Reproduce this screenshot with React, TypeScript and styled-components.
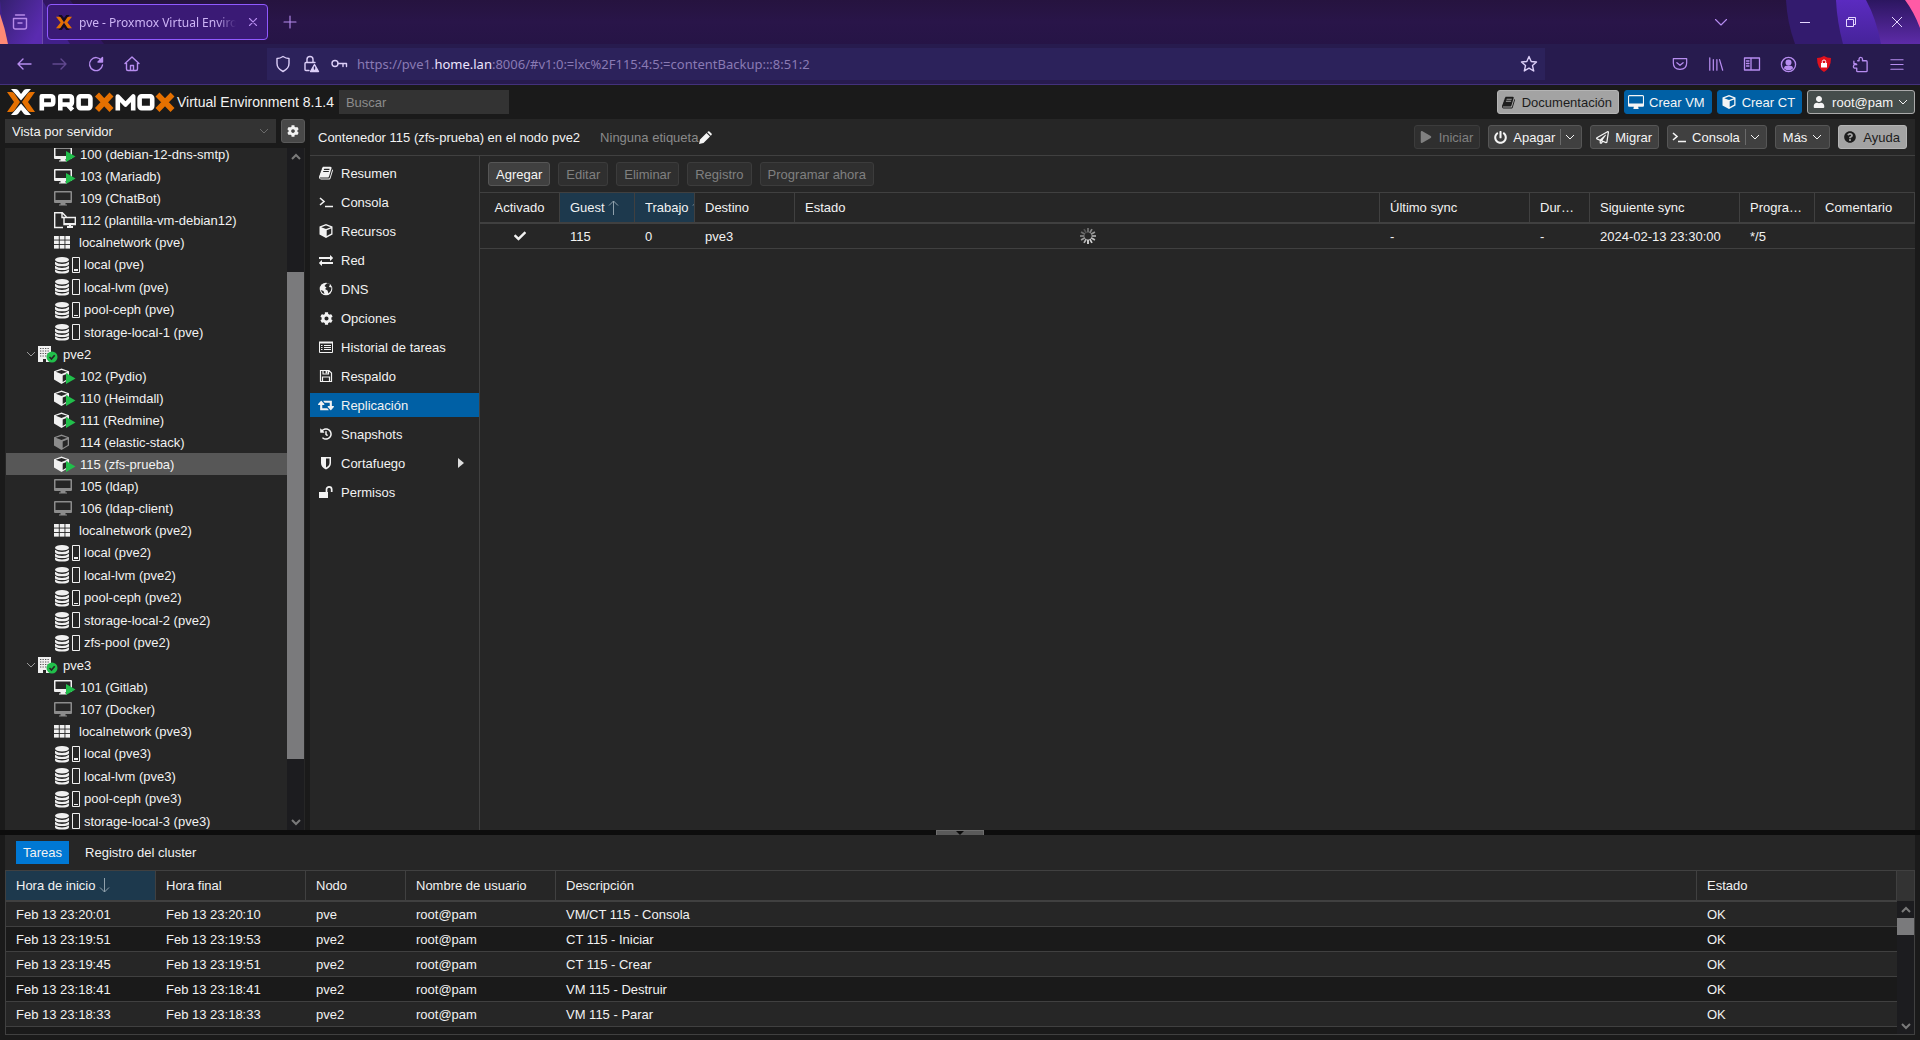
import React from "react";
import styled, { createGlobalStyle, css } from "styled-components";
import * as fa from "react-icons/fa";

const sans = `"Liberation Sans", Arial, Helvetica, sans-serif`;
const chrome = `"Noto Sans", "Open Sans", sans-serif`;

const GlobalStyle = createGlobalStyle`
  * { box-sizing: border-box; }
  body { margin: 0; background: #1a1a1a; color: #f2f2f2; font: 13px/17px ${sans}; overflow: hidden; }
  button, input, select { font: inherit; color: inherit; margin: 0; }
  svg { flex: none; display: block; }
`;

/* ---------- browser window ---------- */

const Screen = styled.div`
  display: flex;
  flex-direction: column;
  height: 100vh;
`;

const TabStrip = styled.header`
  position: relative;
  display: flex;
  align-items: center;
  height: 44px;
  flex: none;
  background: linear-gradient(#26133f, #291549 50%, #261446);
  font-family: ${chrome};
  color: #b68ae8;
`;

const Backdrop = styled.svg<{ $side: "left" | "right" }>`
  position: absolute;
  top: 0;
  ${(p) => (p.$side === "left" ? "left: 0;" : "right: 0;")}
`;

const ChromeButton = styled.button<{ $w: number; $dim?: boolean }>`
  position: relative;
  display: flex;
  align-items: center;
  justify-content: center;
  width: ${(p) => p.$w}px;
  height: 32px;
  padding: 0;
  border: 0;
  background: none;
  color: #b78df0;
  opacity: ${(p) => (p.$dim ? 0.4 : 1)};
`;

const WindowControls = styled.div`
  display: flex;
  margin-left: 38px;
`;

const ViewButton = styled.div`
  position: relative;
  display: flex;
  justify-content: center;
  width: 43px;
  height: 44px;
  padding-right: 8px;
  padding-left: 6px;
  align-items: center;
  border-right: 1px solid #6d4aac;
`;

const Tab = styled.div`
  position: relative;
  display: flex;
  align-items: center;
  width: 221px;
  height: 36px;
  margin: 0 12px 0 4px;
  padding: 0 4px 0 8px;
  gap: 7px;
  border: 1px solid #9059ff;
  border-radius: 4px;
  background: #3a1a75;
`;

const TabTitle = styled.span`
  flex: 1;
  min-width: 0;
  overflow: hidden;
  white-space: nowrap;
  font-size: 12px;
  color: #cdb4f5;
  mask-image: linear-gradient(90deg, #000 88%, transparent);
`;

const Spacer = styled.div`
  flex: 1;
`;

const NavBar = styled.nav`
  display: flex;
  align-items: center;
  flex: none;
  height: 41px;
  padding: 0 6px;
  background: #271b4e;
  border-bottom: 1px solid #43317c;
  font-family: ${chrome};
`;

const NavGroup = styled.div`
  display: flex;
  align-items: center;
`;

const UrlBox = styled.div`
  display: flex;
  align-items: center;
  flex: 1;
  height: 32px;
  margin: 0 117px;
  padding-left: 2px;
  background: #2c225b;
`;

const Url = styled.div`
  flex: 1;
  padding-left: 4px;
  font-size: 13px;
  color: #8a7ab4;
  white-space: nowrap;
  b {
    font-weight: 400;
    color: #ece5ff;
  }
`;

const UrlButton = styled(ChromeButton)`
  color: #dccff8;
`;

/* ---------- application frame ---------- */

const AppHeader = styled.header`
  display: flex;
  align-items: center;
  flex: none;
  height: 34px;
  padding: 0 5px 0 7px;
  gap: 5px;
`;

const Brand = styled.div`
  display: flex;
  align-items: center;
  gap: 2px;
  font-size: 14px;
`;

const Search = styled.input`
  width: 170px;
  height: 24px;
  padding: 0 7px;
  border: 0;
  background: #333;
  outline: 0;
  &::placeholder {
    color: #8c8c8c;
    opacity: 1;
  }
`;

const tones = {
  normal: css`
    background: #404040;
    border-color: #565656;
  `,
  disabled: css`
    background: #2f2f2f;
    border-color: #3c3c3c;
    color: #808080;
  `,
  primary: css`
    background: #0060a5;
    border-color: #0060a5;
  `,
  light: css`
    background: #a3a3a3;
    border-color: #b4b4b4;
    color: #1c1c1c;
  `,
  user: css`
    background: #454d4b;
    border-color: #aaa;
  `,
};

const Button = styled.button<{ $tone?: keyof typeof tones; $icon?: boolean }>`
  display: flex;
  align-items: center;
  justify-content: center;
  flex: none;
  gap: 5px;
  height: 24px;
  padding: ${(p) => (p.$icon ? "0 6px 0 3px" : "0 7px")};
  border: 1px solid;
  border-radius: 3px;
  white-space: nowrap;
  color: #f5f5f5;
  ${(p) => tones[p.$tone ?? "normal"]}
`;

const Glyph = styled.span`
  display: flex;
  justify-content: center;
  width: 16px;
`;

const Split = styled.span`
  display: flex;
  align-items: center;
  height: 16px;
  padding-left: 4px;
  border-left: 1px solid #6a6a6a;
`;

const Workspace = styled.div`
  display: flex;
  flex: 1;
  min-height: 0;
  gap: 5px;
  padding: 0 5px;
`;

const Sidebar = styled.aside`
  display: flex;
  flex-direction: column;
  width: 300px;
  flex: none;
`;

const ViewRow = styled.div`
  display: flex;
  gap: 5px;
  height: 29px;
  flex: none;
`;

const ViewPicker = styled.label`
  position: relative;
  flex: 1;
  height: 24px;
  background: #333;
  svg {
    position: absolute;
    right: 7px;
    top: 7px;
    color: #6b6b6b;
    pointer-events: none;
  }
`;

const ViewSelect = styled.select`
  appearance: none;
  width: 100%;
  height: 24px;
  padding: 0 7px;
  border: 0;
  background: none;
`;

const IconButton = styled.button`
  display: flex;
  align-items: center;
  justify-content: center;
  width: 24px;
  height: 24px;
  padding: 0;
  border: 1px solid #5a5a5a;
  border-radius: 3px;
  background: #484848;
`;

const TreeFrame = styled.div`
  display: flex;
  flex: 1;
  min-height: 0;
  padding-right: 1px;
  background: #262626;
  overflow: hidden;
`;

/* The list is scrolled close to its end, so the rows rest on the lower edge. */
const Tree = styled.ul`
  display: flex;
  flex-direction: column;
  justify-content: flex-end;
  flex: 1;
  min-width: 0;
  min-height: 0;
  margin: 0 0 -2px;
  padding: 0 0 0 1px;
  overflow: hidden;
  list-style: none;
`;

const TreeRow = styled.li<{ $selected?: boolean; $tall?: boolean; $node?: boolean }>`
  display: flex;
  align-items: center;
  flex: none;
  height: ${(p) => (p.$tall ? 23 : 22)}px;
  padding-left: ${(p) => (p.$node ? 20 : 48)}px;
  white-space: nowrap;
  background: ${(p) => (p.$selected ? "#575757" : "transparent")};
`;

const TreeIcon = styled.span<{ $w: number }>`
  width: ${(p) => p.$w}px;
  flex: none;
  color: #999;
`;

const ScrollTrack = styled.div<{ $before: number; $thumb: number; $after: number }>`
  display: grid;
  grid-template-rows: 17px ${(p) => p.$before}fr ${(p) => p.$thumb}fr ${(p) => p.$after}fr 17px;
  justify-items: center;
  align-items: center;
  width: 17px;
  flex: none;
  background: #1c1c1f;
  color: #7a7a7a;
`;

const Thumb = styled.div`
  grid-row: 3;
  width: 17px;
  height: 100%;
  background: #7a7a7c;
`;

const ArrowDown = styled.span`
  grid-row: 5;
`;

const Main = styled.main`
  display: flex;
  flex-direction: column;
  flex: 1;
  min-width: 0;
  background: #262626;
`;

const TitleBar = styled.div`
  display: flex;
  align-items: center;
  flex: none;
  gap: 8px;
  height: 37px;
  padding: 0 8px;
  border-bottom: 1px solid #404040;
`;

const Title = styled.h1`
  margin: 0 12px 0 0;
  font-size: 13px;
  font-weight: 400;
`;

const Tags = styled.span`
  display: flex;
  align-items: center;
  gap: 1px;
  color: #8a8a8a;
  svg {
    color: #f5f5f5;
  }
`;

const Body = styled.div`
  display: flex;
  flex: 1;
  min-height: 0;
`;

const Menu = styled.nav`
  display: flex;
  flex-direction: column;
  flex: none;
  gap: 5px;
  width: 170px;
  padding-top: 5px;
  border-right: 1px solid #404040;
`;

const MenuItem = styled.a<{ $active?: boolean }>`
  display: flex;
  align-items: center;
  gap: 7px;
  height: 24px;
  padding: 0 15px 0 8px;
  color: #f2f2f2;
  text-decoration: none;
  background: ${(p) => (p.$active ? "#0060a5" : "transparent")};
`;

const MenuLabel = styled.span`
  flex: 1;
`;

const Content = styled.section`
  flex: 1;
  min-width: 0;
`;

const Toolbar = styled.div`
  display: flex;
  align-items: center;
  gap: 8px;
  height: 36px;
  padding: 0 8px;
`;

/* ---------- tables ---------- */

const Table = styled.table`
  width: 100%;
  table-layout: fixed;
  border-collapse: separate;
  border-spacing: 0;
`;

const Th = styled.th<{ $sorted?: boolean; $center?: boolean }>`
  height: 32px;
  padding: 0 ${(p) => (p.$center ? 10 : 0)}px 0 10px;
  border: solid #404040;
  border-width: 1px 1px 2px 0;
  background: ${(p) => (p.$sorted ? "#1d394d" : "#262626")};
  font-weight: 400;
  line-height: 15px;
  text-align: ${(p) => (p.$center ? "center" : "left")};
  white-space: nowrap;
  overflow: hidden;
`;

const ThInner = styled.span<{ $clip?: boolean }>`
  display: ${(p) => (p.$clip ? "block" : "flex")};
  align-items: center;
  gap: 3px;
  padding-right: ${(p) => (p.$clip ? 10 : 0)}px;
  overflow: hidden;
  text-overflow: ellipsis;
  svg {
    color: #8fa0ab;
  }
`;

const Td = styled.td<{ $center?: boolean }>`
  height: 25px;
  padding: 0 10px;
  border-bottom: 1px solid #404040;
  text-align: ${(p) => (p.$center ? "center" : "left")};
  white-space: nowrap;
  svg {
    margin: 0 auto;
  }
`;

const LogRow = styled.tr<{ $alt?: boolean }>`
  background: ${(p) => (p.$alt ? "#1a1a1a" : "#262626")};
`;

const Splitter = styled.div`
  display: flex;
  justify-content: center;
  flex: none;
  height: 5px;
  background: #0d0d0d;
`;

const Grip = styled.button`
  display: flex;
  align-items: center;
  justify-content: center;
  width: 48px;
  height: 5px;
  padding: 0;
  border: 1px solid #6e6e6e;
  border-bottom: 0;
  background: #5a5a5a;
  color: #0a0a0a;
`;

const LogPanel = styled.section`
  flex: none;
  margin: 0 5px 5px;
  background: #262626;
`;

const LogTabs = styled.div`
  display: flex;
  align-items: center;
  gap: 9px;
  height: 35px;
  padding: 0 11px;
`;

const LogTab = styled.button<{ $active?: boolean }>`
  height: 23px;
  padding: 0 7px;
  border: 0;
  background: ${(p) => (p.$active ? "#0078d4" : "none")};
`;

const LogGrid = styled.div`
  display: flex;
  height: 165px;
  border: solid #404040;
  border-width: 0 1px 1px;
  background: #1a1a1a;
  overflow: hidden;
`;

const LogTable = styled.div`
  flex: 1;
  min-width: 0;
`;

const LogScroll = styled.div`
  display: flex;
  flex-direction: column;
  flex: none;
  width: 17px;
`;

const LogCorner = styled.div`
  height: 31px;
  flex: none;
  border-top: 1px solid #404040;
  background: #333;
`;

const LogTrack = styled(ScrollTrack)`
  flex: 1;
`;

/* ---------- icons ---------- */

/* Font Awesome 4 outlines, drawn on their 1792-unit grid */
const Fa4 = ({ d, w = 14, h = 14, box = "0 0 1792 1792" }: { d: string; w?: number; h?: number; box?: string }) => (
  <svg width={w} height={h} viewBox={box} fill="currentColor">
    <path d={d} />
  </svg>
);

const Chevron = ({ size = 10, up = false, stroke = 1 }) => (
  <svg width={size} height={size} viewBox="0 0 10 10" fill="none" stroke="currentColor" strokeWidth={stroke}>
    <path d={up ? "M1 7l4-4 4 4" : "M1 3l4 4 4-4"} />
  </svg>
);

const SortArrow = ({ down = false }) => (
  <svg width="11" height="15" viewBox="0 0 11 15" fill="none" stroke="currentColor">
    <path d={down ? "M5.500 0v14M1 9.500l4.500 4.500L10 9.500" : "M5.500 15V1M1 5.500L5.500 1 10 5.500"} />
  </svg>
);

const Play = () => <path d="M12 6l9.500 5.500L12 17z" fill="#21bf4b" />;

const VmIcon = ({ run = false }) => (
  <svg width="22" height="18" viewBox="0 0 22 18">
    <path
      fill={run ? "#f0f0f0" : "#8c8c8c"}
      fillRule="evenodd"
      d="M1 2h16q1 0 1 1v10q0 1-1 1h-5.500v1.500h1.500v1H5v-1h1.500V14H1q-1 0-1-1V3q0-1 1-1zm.500 1.500v7.500h15V3.500z"
    />
    {run && <Play />}
  </svg>
);

const CtIcon = ({ run = false }) => (
  <svg width="22" height="18" viewBox="0 0 22 18">
    <path d="M7.500 1.500L15 4.300v8.200L7.500 17 0 12.500V4.300z" fill={run ? "#f0f0f0" : "#8c8c8c"} />
    <path d="M1.800 4.800L7.500 3l5.700 1.800L7.500 7zM8.700 8.500l5-2v5.400l-5 3z" fill="#262626" />
    {run && <Play />}
  </svg>
);

const TemplateIcon = () => (
  <svg width="22" height="18" viewBox="0 0 22 18" fill="none" stroke="#f0f0f0" strokeWidth="1.400">
    <path d="M9 16.500H.7V1.700h7.600L12.500 6M8 2v4.500h2" />
    <path d="M10 6.500h11.300v7H10z" fill="#262626" />
    <path d="M10 13h11.300M13 16h6M16 13v3" strokeWidth="2" />
  </svg>
);

const NetIcon = () => (
  <svg width="16" height="13" viewBox="0 0 16 13" fill="#f0f0f0">
    {[0, 4.500, 9].map((y) => [0, 5.700, 11.400].map((x) => <rect key={`${x}-${y}`} x={x} y={y} width="4.800" height="3.600" />))}
  </svg>
);

const StorageIcon = ({ level }: { level: number }) => (
  <svg width="26" height="18" viewBox="0 0 26 18">
    <g fill="#f0f0f0">
      <ellipse cx="8" cy="3.800" rx="7" ry="2.800" />
      <path d="M1 5.800q3 2.200 7 2.200t7-2.200v2.200q0 2.300-7 2.300T1 8zM1 9.800q3 2.200 7 2.200t7-2.200V12q0 2-7 2t-7-2zM1 13.400q3 2 7 2t7-2v1.800q0 2.300-7 2.300t-7-2.300z" />
      {level > 0 && <rect x="20" y={15 - level} width="4" height={level} />}
    </g>
    <path d="M18.500 1.500h7v15h-7z" fill="none" stroke="#f0f0f0" />
  </svg>
);

const NodeIcon = () => (
  <svg width="20" height="18" viewBox="0 0 20 18">
    <path d="M0 1h13v16H0z" fill="#f0f0f0" />
    {[3.500, 6, 8.500, 11].map((y) => (
      <path key={y} d={`M2 ${y}h9`} stroke="#555" strokeDasharray="1.300 1.200" />
    ))}
    <path d="M5 14h3v3H5z" fill="#262626" />
    <circle cx="14" cy="12" r="5.500" fill="#21bf4b" />
    <path d="M11.500 12l2 2 3.200-3.700" fill="none" stroke="#262626" strokeWidth="1.700" />
  </svg>
);

const XMark = () => (
  <svg width="16" height="15" viewBox="0 0 28 26">
    <path d="M4 0h6l4 5 4-5h6L14 12zM4 26h6l4-5 4 5h6L14 14z" fill="#160c1e" />
    <path d="M0 3h5q2 0 3 1l6 9-6 9q-1 1-3 1H0l8-10zM28 3h-5q-2 0-3 1l-6 9 6 9q1 1 3 1h5l-8-10z" fill="#e57000" />
  </svg>
);

const Logo = () => (
  <svg width="168" height="26" viewBox="0 0 168 26" role="img" aria-label="Proxmox">
    <path d="M4 0h4q2 0 3 1l3 4 3-4q1-1 3-1h4l-10 11.500zM4 26h4q2 0 3-1l3-4 3 4q1 1 3 1h4L14 14.500z" fill="#fff" />
    <path d="M0 3h4q2 0 3 1l6 9-6 9q-1 1-3 1H0l7-10zM28 3h-4q-2 0-3 1l-6 9 6 9q1 1 3 1h4l-7-10z" fill="#e57000" />
    <g fill="none" stroke="#fff" strokeWidth="4.600" strokeLinejoin="round">
      <path d="M34.800 21.500V7.300h9q2.400 0 2.400 2.300v3.600q0 2.300-2.400 2.300h-9" />
      <path d="M53.300 21.500V7.300h9.200q2.400 0 2.400 2.300v3.600q0 2.300-2.400 2.300h-9.200M60 15l5.500 6" />
      <rect x="71.600" y="7.300" width="11.800" height="11.800" rx="2" />
      <path d="M110.800 21.500V7.500l7.700 8 7.700-8v14" />
      <rect x="132.600" y="7.300" width="12.600" height="11.800" rx="2" />
    </g>
    <path d="M90 5.500l14.500 15.500M104.500 5.500L90 21M150.500 5.500L165.500 21M165.500 5.500L150.500 21" stroke="#e57000" strokeWidth="5.500" />
  </svg>
);

const Spinner = () => (
  <svg width="16" height="16" viewBox="0 0 16 16" stroke="#e6e6e6" strokeWidth="1.700">
    {Array.from({ length: 12 }, (_, i) => (
      <path key={i} d="M8 0v4.500" transform={`rotate(${i * 30} 8 8)`} opacity={i < 7 ? 0.4 + i * 0.1 : 0.75 - (i - 7) * 0.13} />
    ))}
  </svg>
);

const Line = ({ d, size = 18, w = 1.4, children }: { d: string; size?: number; w?: number; children?: React.ReactNode }) => (
  <svg width={size} height={size} viewBox="0 0 18 18" fill="none" stroke="currentColor" strokeWidth={w} strokeLinecap="round" strokeLinejoin="round">
    <path d={d} />
    {children}
  </svg>
);

const Terminal = () => (
  <svg width="14" height="14" viewBox="0 0 14 14" fill="none" stroke="currentColor" strokeWidth="1.600">
    <path d="M1 3l4 3.500L1 10M6 11.500h8" />
  </svg>
);

const Desktop = () => (
  <Fa4
    w={16}
    h={14}
    box="0 0 1920 1664"
    d="M1792 992V160q0-13-9.500-22.500T1760 128H160q-13 0-22.500 9.500T128 160v832q0 13 9.500 22.500t22.500 9.500h1600q13 0 22.500-9.500t9.500-22.500zm128-832v1088q0 66-47 113t-113 47h-544q0 37 16 77.500t32 71 16 43.500q0 26-19 45t-45 19H704q-26 0-45-19t-19-45q0-14 16-44t32-70 16-78H160q-66 0-113-47T0 1248V160Q0 94 47 47T160 0h1600q66 0 113 47t47 113z"
  />
);

const Cube = () => (
  <svg width="14" height="14" viewBox="0 0 14 14">
    <path fillRule="evenodd" fill="currentColor" d="M7 0l6.500 2.500v8L7 14 .5 10.500v-8zM7 1.500L2.300 3.300 7 5.100l4.700-1.800zM7.700 12l4.500-2.400V4.600L7.700 6.300z" />
  </svg>
);

const Book = ({ size = 14 }) => (
  <Fa4
    w={size}
    h={size}
    box="0 100 1670 1560"
    d="M1639 478q40 57 18 129l-275 906q-19 64-76.500 107.500T1183 1664H260q-77 0-148.500-53.500T12 1479q-24-67-2-127 0-4 3-27t4-37q1-8-3-21.500t-3-19.500q2-11 8-21t16.500-23.500T52 1179q23-38 45-91.500t30-91.500q3-10 .5-30t-.5-28q3-11 17-28t17-23q21-36 42-92t25-90q1-9-2.500-32t.500-28q4-13 22-30.500t22-22.500q19-26 42.500-84.500T340 411q1-8-3-25.500t-2-26.500q2-8 9-18t18-23 17-21q8-12 16.500-30.500t15-35 16-36 19.500-32T469.500 140t36-11.500T553 134l-1 3q38-9 51-9h761q74 0 114 56t18 130l-274 906q-36 119-71.500 153.500T1022 1408H153q-27 0-38 15-11 16-1 43 24 70 144 70h923q29 0 56-15.500t35-41.500l300-987q7-22 5-57 38 15 59 43zm-1064 2q-4 13 2 22.500t20 9.500h608q13 0 25.500-9.500T1247 480l21-64q4-13-2-22.500t-20-9.500H638q-13 0-25.500 9.500T596 416zm-83 256q-4 13 2 22.500t20 9.500h608q13 0 25.500-9.500T1164 736l21-64q4-13-2-22.500t-20-9.500H555q-13 0-25.500 9.500T513 672z"
  />
);

const Pencil = () => (
  <svg width="13" height="13" viewBox="0 0 13 13" fill="currentColor">
    <path d="M0 13l1-4.500L7.500 2 11 5.500 4.500 12zM8.300 1.200L9 .5q.7-.7 1.400 0l2.100 2.100q.7.7 0 1.400l-.7.700z" />
  </svg>
);

/* ---------- data ---------- */

type Kind = "vm" | "vm-on" | "ct" | "ct-on" | "tpl" | "net" | "store" | "node";
type Item = { kind: Kind; label: string; level?: number; selected?: boolean };

const tree: Item[] = [
  { kind: "vm-on", label: "100 (debian-12-dns-smtp)" },
  { kind: "vm-on", label: "103 (Mariadb)" },
  { kind: "vm", label: "109 (ChatBot)" },
  { kind: "tpl", label: "112 (plantilla-vm-debian12)" },
  { kind: "net", label: "localnetwork (pve)" },
  { kind: "store", label: "local (pve)", level: 2 },
  { kind: "store", label: "local-lvm (pve)" },
  { kind: "store", label: "pool-ceph (pve)", level: 1 },
  { kind: "store", label: "storage-local-1 (pve)" },
  { kind: "node", label: "pve2" },
  { kind: "ct-on", label: "102 (Pydio)" },
  { kind: "ct-on", label: "110 (Heimdall)" },
  { kind: "ct-on", label: "111 (Redmine)" },
  { kind: "ct", label: "114 (elastic-stack)" },
  { kind: "ct-on", label: "115 (zfs-prueba)", selected: true },
  { kind: "vm", label: "105 (ldap)" },
  { kind: "vm", label: "106 (ldap-client)" },
  { kind: "net", label: "localnetwork (pve2)" },
  { kind: "store", label: "local (pve2)", level: 2 },
  { kind: "store", label: "local-lvm (pve2)" },
  { kind: "store", label: "pool-ceph (pve2)", level: 1 },
  { kind: "store", label: "storage-local-2 (pve2)" },
  { kind: "store", label: "zfs-pool (pve2)", level: 0 },
  { kind: "node", label: "pve3" },
  { kind: "vm-on", label: "101 (Gitlab)" },
  { kind: "vm", label: "107 (Docker)" },
  { kind: "net", label: "localnetwork (pve3)" },
  { kind: "store", label: "local (pve3)", level: 2 },
  { kind: "store", label: "local-lvm (pve3)" },
  { kind: "store", label: "pool-ceph (pve3)", level: 1 },
  { kind: "store", label: "storage-local-3 (pve3)" },
];

const iconFor = (item: Item): [React.ReactNode, number] => {
  switch (item.kind) {
    case "vm":
      return [<VmIcon />, 26];
    case "vm-on":
      return [<VmIcon run />, 26];
    case "ct":
      return [<CtIcon />, 26];
    case "ct-on":
      return [<CtIcon run />, 26];
    case "tpl":
      return [<TemplateIcon />, 26];
    case "net":
      return [<NetIcon />, 25];
    case "store":
      return [<StorageIcon level={item.level ?? 0} />, 30];
    case "node":
      return [<NodeIcon />, 25];
  }
};

const menu: [string, React.ReactNode][] = [
  ["Resumen", <Book />],
  ["Consola", <Terminal />],
  ["Recursos", <Cube />],
  ["Red", <Fa4 d="M1792 1184v192q0 13-9.500 22.500t-22.500 9.500H384v192q0 13-9.500 22.500T352 1632q-12 0-24-10L9 1302q-9-9-9-22 0-14 9-23l320-320q9-9 23-9 13 0 22.500 9.500T384 960v192h1376q13 0 22.500 9.500t9.500 22.500zm0-544q0 14-9 23l-320 320q-9 9-23 9-13 0-22.500-9.500T1408 960V768H32q-13 0-22.500-9.500T0 736V544q0-13 9.500-22.500T32 512h1376V320q0-14 9-23t23-9q12 0 24 10l319 319q9 9 9 23z" />],
  ["DNS", <svg width="14" height="14" viewBox="0 0 14 14"><circle cx="7" cy="7" r="6.300" fill="currentColor" /><path d="M7 2l2-1 2 1.500-1 2.500 2.500.5-.5 3-2.500 3-1-3L6 7l1.500-1.500L5.500 4zM1.500 8l3 1 1 3-2-1z" fill="#262626" /></svg>],
  ["Opciones", <fa.FaCog size={13} />],
  ["Historial de tareas", <svg width="14" height="14" viewBox="0 0 14 14" fill="none" stroke="currentColor"><path d="M.5 2.500h13v10H.5zM2 5.500h1.500M2 7.500h1.500M2 9.500h1.500M5 5.500h7M5 7.500h7M5 9.500h7" /><path d="M0 2.500h14" strokeWidth="2" /></svg>],
  ["Respaldo", <svg width="14" height="14" viewBox="0 0 14 14" fill="none" stroke="currentColor" strokeWidth="1.200"><path d="M1.500 1.500h8.500l2.500 2.500v8.500h-11zM4 1.500v3.500h5.500V1.500M3.500 12.500V8h7v4.500" /><path d="M7.500 2v2.500" strokeWidth="1.800" /></svg>],
  ["Replicación", <Fa4 w={16} box="0 320 1920 1280" h={11} d="M1280 1504q0 13-9.500 22.500t-22.500 9.500H288q-8 0-13.500-2t-9-7-5.500-8-3-11.500-1-11.500V896H64q-26 0-45-19T0 832q0-24 15-41l320-384q19-22 49-22t49 22l320 384q15 17 15 41 0 26-19 45t-45 19H512v384h576q16 0 25 11l160 192q7 10 7 21zm640-416q0 24-15 41l-320 384q-20 23-49 23t-49-23l-320-384q-15-17-15-41 0-26 19-45t45-19h192V640H832q-16 0-25-12L647 436q-7-9-7-20 0-13 9.500-22.500T672 384h960q8 0 13.500 2t9 7 5.500 8 3 11.500 1 11.500v600h192q26 0 45 19t19 45z" />],
  ["Snapshots", <fa.FaHistory size={12} />],
  ["Cortafuego", <svg width="14" height="14" viewBox="0 0 14 14"><path fillRule="evenodd" fill="currentColor" d="M2 1h10v6q0 4-5 6.500Q2 11 2 7zm5 1.500v9q3.500-2 3.500-4.500V2.500z" /></svg>],
  ["Permisos", <svg width="14" height="14" viewBox="0 0 14 14"><path d="M0 7h9v6H0z" fill="currentColor" /><path d="M7.500 8V4.500a2.600 2.600 0 0 1 5.200 0V7" fill="none" stroke="currentColor" strokeWidth="1.700" /></svg>],
];

const logs = [
  ["Feb 13 23:20:01", "Feb 13 23:20:10", "pve", "root@pam", "VM/CT 115 - Consola", "OK"],
  ["Feb 13 23:19:51", "Feb 13 23:19:53", "pve2", "root@pam", "CT 115 - Iniciar", "OK"],
  ["Feb 13 23:19:45", "Feb 13 23:19:51", "pve2", "root@pam", "CT 115 - Crear", "OK"],
  ["Feb 13 23:18:41", "Feb 13 23:18:41", "pve2", "root@pam", "VM 115 - Destruir", "OK"],
  ["Feb 13 23:18:33", "Feb 13 23:18:33", "pve2", "root@pam", "VM 115 - Parar", "OK"],
];

const Cols = ({ widths }: { widths: (number | undefined)[] }) => (
  <colgroup>
    {widths.map((w, i) => (
      <col key={i} width={w} />
    ))}
  </colgroup>
);

/* ---------- sections ---------- */

const Browser = () => (
  <>
    <TabStrip>
      <Backdrop $side="left" width="104" height="44" viewBox="0 0 104 44">
        <defs>
          <linearGradient id="glow" x1="0" y1="0" x2="1" y2="0.600">
            <stop offset="0" stopColor="#34206e" />
            <stop offset="1" stopColor="#5a2bb0" />
          </linearGradient>
        </defs>
        <path d="M0 0h70l34 44H0z" fill="#311661" />
        <path d="M0 0h42l28 44H0z" fill="#41208a" />
        <path d="M0 0h42v44H6z" fill="url(#glow)" />
        <path d="M0 14q5 14 8 30H0z" fill="#ff8a75" />
      </Backdrop>
      <Backdrop $side="right" width="136" height="44" viewBox="0 0 136 44">
        <defs>
          <linearGradient id="band" x1="0" y1="0" x2="0" y2="1">
            <stop offset="0" stopColor="#5b2bc0" />
            <stop offset="1" stopColor="#46239a" />
          </linearGradient>
          <linearGradient id="end" x1="0" y1="0" x2="0" y2="1">
            <stop offset="0" stopColor="#2c1660" />
            <stop offset="1" stopColor="#5d2ba8" />
          </linearGradient>
        </defs>
        <path d="M2 0h134v44H11Q3 22 2 0z" fill="#331b6e" />
        <path d="M52 0h84v44H59Q53 22 52 0z" fill="url(#band)" />
        <path d="M82 0h54v44H97Q92 18 82 0z" fill="url(#end)" />
        <path d="M121 0h15v28Q130 12 121 0z" fill="#ff5aa5" />
      </Backdrop>
      <ViewButton>
        <Line d="M2.500 5.500h13v8.500q0 2-2 2h-9q-2 0-2-2zM4.500 2h9M7 10h4" />
      </ViewButton>
      <Tab>
        <XMark />
        <TabTitle>pve - Proxmox Virtual Environment</TabTitle>
        <ChromeButton $w={20} aria-label="Cerrar pestaña"><Line size={14} d="M4.500 4.500l9 9M13.500 4.500l-9 9" /></ChromeButton>
      </Tab>
      <ChromeButton $w={20} aria-label="Nueva pestaña"><Line w={1.1} d="M9 3v12M3 9h12" /></ChromeButton>
      <Spacer />
      <ChromeButton $w={46} aria-label="Listar pestañas"><Line w={1.1} d="M3.500 6.500L9 12l5.500-5.500" /></ChromeButton>
      <WindowControls>
        <ChromeButton $w={46} aria-label="Minimizar"><svg width="10" height="11"><path d="M0 5.500h10" stroke="#e5d8ff" /></svg></ChromeButton>
        <ChromeButton $w={46} aria-label="Restaurar"><svg width="12" height="12" fill="none" stroke="#e5d8ff"><path d="M1.500 3.500h7v7h-7zM3.500 3.500v-2h7v7h-2" /></svg></ChromeButton>
        <ChromeButton $w={46} aria-label="Cerrar"><svg width="12" height="12" stroke="#e5d8ff"><path d="M1 1l10 10M11 1L1 11" /></svg></ChromeButton>
      </WindowControls>
    </TabStrip>
    <NavBar>
      <NavGroup>
        <ChromeButton $w={36} aria-label="Atrás"><Line d="M16 9H3M8 4L3 9l5 5" /></ChromeButton>
        <ChromeButton $w={36} $dim aria-label="Adelante"><Line d="M2 9h13M10 4l5 5-5 5" /></ChromeButton>
        <ChromeButton $w={36} aria-label="Recargar"><Line d="M14.500 5.500A6.500 6.500 0 1 0 15.500 10"><path d="M15.500 2.500v4.500H11z" fill="currentColor" /></Line></ChromeButton>
        <ChromeButton $w={36} aria-label="Inicio"><Line d="M2 8.500L9 2l7 6.500M3.500 8v6q0 1.500 1.500 1.500h8q1.500 0 1.500-1.500V8M7.500 15v-4.500h3V15" /></ChromeButton>
      </NavGroup>
      <UrlBox>
        <NavGroup>
          <UrlButton $w={28} aria-label="Protección"><Line d="M9 1.500q3 2 6 2v5q0 5-6 8-6-3-6-8v-5q3 0 6-2z" /></UrlButton>
          <UrlButton $w={28} aria-label="Conexión no segura"><Line d="M7 15.500H4q-1 0-1-1v-6q0-1 1-1h9M5 7.500v-3q0-3 3-3t3 3v3"><path d="M12.500 9.500l4 7h-8z" fill="currentColor" /><path d="M12.500 12v2" stroke="#2c225b" /></Line></UrlButton>
          <UrlButton $w={28} aria-label="Contraseña"><Line d="M8 8.500h8.500v3M13 8.500v3"><circle cx="5" cy="8.500" r="3" /></Line></UrlButton>
        </NavGroup>
        <Url>https://pve1.<b>home.lan</b>:8006/#v1:0:=lxc%2F115:4:5:=contentBackup:::8:51:2</Url>
        <UrlButton $w={32} aria-label="Marcador"><Line d="M9 1.500l2.200 5 5.300.5-4 3.600 1.200 5.400L9 13.200 4.300 16l1.200-5.400-4-3.600 5.300-.5z" /></UrlButton>
      </UrlBox>
      <NavGroup>
        <ChromeButton $w={36} aria-label="Pocket"><Line size={16} d="M1.500 3h15v5q0 7-7.500 7T1.500 8zM5.500 7.500L9 10.500l3.500-3" /></ChromeButton>
        <ChromeButton $w={36} aria-label="Biblioteca"><Line size={16} d="M2 2v14M6 4v12M10 4v12M13 4l3.500 12" /></ChromeButton>
        <ChromeButton $w={36} aria-label="Barra lateral"><Line d="M1.500 3h15v12h-15zM8 3v12M3.500 6H6M3.500 8.500H6M3.500 11H6" w={1.3} /></ChromeButton>
        <ChromeButton $w={36} aria-label="Cuenta"><Line size={17} d="M9 1.500a7.500 7.500 0 1 1 0 15a7.500 7.500 0 1 1 0-15z"><circle cx="9" cy="7" r="2.500" fill="currentColor" /><path d="M5 13q0-2 2-2h4q2 0 2 2-4 3-8 0z" fill="currentColor" /></Line></ChromeButton>
        <ChromeButton $w={36} aria-label="Bloqueador">
          <svg width="16" height="16" viewBox="0 0 16 16"><path d="M8 0q3 2 7 2 0 10-7 14Q1 12 1 2q4 0 7-2z" fill="#e0101c" /><path d="M5 7h6v4.500H5z" fill="#fff" /><path d="M6.300 7V5.500q0-1.500 1.700-1.500t1.700 1.500V7" fill="none" stroke="#fff" /></svg>
        </ChromeButton>
        <ChromeButton $w={36} aria-label="Extensiones"><Line size={17} d="M6 5h1.500V3.500q0-2 1.800-2t1.800 2V5H15q1 0 1 1v9.500q0 1-1 1H6q-1 0-1-1v-2.700H3.500q-2 0-2-1.800t2-1.800H5V9q0-1-1.500-1H2V5.500" /></ChromeButton>
        <ChromeButton $w={36} aria-label="Menú"><Line size={17} w={1.1} d="M3 4h13M3 9h13M3 14h13" /></ChromeButton>
      </NavGroup>
    </NavBar>
  </>
);

const ResourceTree = () => (
  <Sidebar>
    <ViewRow>
      <ViewPicker>
        <ViewSelect aria-label="Vista">
          <option>Vista por servidor</option>
        </ViewSelect>
        <Chevron />
      </ViewPicker>
      <IconButton aria-label="Ajustes"><fa.FaCog size={12} /></IconButton>
    </ViewRow>
    <TreeFrame>
      <Tree>
        {tree.map((item) => {
          const [icon, width] = iconFor(item);
          const node = item.kind === "node";
          return (
            <TreeRow key={item.label} $selected={item.selected} $tall={item.level !== undefined} $node={node}>
              {node && <TreeIcon $w={12}><Chevron /></TreeIcon>}
              <TreeIcon $w={width}>{icon}</TreeIcon>
              {item.label}
            </TreeRow>
          );
        })}
      </Tree>
      <ScrollTrack $before={107} $thumb={487} $after={54}>
        <Chevron up stroke={2} />
        <Thumb />
        <ArrowDown><Chevron stroke={2} /></ArrowDown>
      </ScrollTrack>
    </TreeFrame>
  </Sidebar>
);

const Replication = () => (
  <Content>
    <Toolbar>
      <Button>Agregar</Button>
      {["Editar", "Eliminar", "Registro", "Programar ahora"].map((t) => (
        <Button key={t} $tone="disabled" disabled>{t}</Button>
      ))}
    </Toolbar>
    <Table>
      <Cols widths={[80, 75, 60, 100, undefined, 150, 60, 150, 75, 100]} />
      <thead>
        <tr>
          <Th $center>Activado</Th>
          <Th $sorted><ThInner>Guest<SortArrow /></ThInner></Th>
          <Th $sorted><ThInner>Trabajo<SortArrow /></ThInner></Th>
          <Th>Destino</Th>
          <Th>Estado</Th>
          <Th>Último sync</Th>
          <Th><ThInner $clip>Duración</ThInner></Th>
          <Th>Siguiente sync</Th>
          <Th><ThInner $clip>Programación</ThInner></Th>
          <Th>Comentario</Th>
        </tr>
      </thead>
      <tbody>
        <tr>
          <Td $center><fa.FaCheck size={12} /></Td>
          <Td>115</Td>
          <Td>0</Td>
          <Td>pve3</Td>
          <Td><Spinner /></Td>
          <Td>-</Td>
          <Td>-</Td>
          <Td>2024-02-13 23:30:00</Td>
          <Td>*/5</Td>
          <Td />
        </tr>
      </tbody>
    </Table>
  </Content>
);

const TaskLog = () => (
  <LogPanel>
    <LogTabs>
      <LogTab $active>Tareas</LogTab>
      <LogTab>Registro del cluster</LogTab>
    </LogTabs>
    <LogGrid>
      <LogTable>
        <Table>
          <Cols widths={[150, 150, 100, 150, undefined, 200]} />
          <thead>
            <tr>
              <Th $sorted><ThInner>Hora de inicio<SortArrow down /></ThInner></Th>
              {["Hora final", "Nodo", "Nombre de usuario", "Descripción", "Estado"].map((h) => (
                <Th key={h}>{h}</Th>
              ))}
            </tr>
          </thead>
          <tbody>
            {logs.map((row, i) => (
              <LogRow key={i} $alt={i % 2 === 1}>
                {row.map((cell, j) => (
                  <Td key={j}>{cell}</Td>
                ))}
              </LogRow>
            ))}
          </tbody>
        </Table>
      </LogTable>
      <LogScroll>
        <LogCorner />
        <LogTrack $before={0} $thumb={17} $after={82}>
          <Chevron up stroke={2} />
          <Thumb />
          <ArrowDown><Chevron stroke={2} /></ArrowDown>
        </LogTrack>
      </LogScroll>
    </LogGrid>
  </LogPanel>
);

export default function App() {
  return (
    <Screen>
      <GlobalStyle />
      <Browser />
      <AppHeader>
        <Brand>
          <Logo />
          Virtual Environment 8.1.4
        </Brand>
        <Search placeholder="Buscar" aria-label="Buscar" />
        <Spacer />
        <Button $tone="light" $icon><Glyph><Book size={13} /></Glyph>Documentación</Button>
        <Button $tone="primary" $icon><Glyph><Desktop /></Glyph>Crear VM</Button>
        <Button $tone="primary" $icon><Glyph><Cube /></Glyph>Crear CT</Button>
        <Button $tone="user" $icon><Glyph><fa.FaUser size={12} /></Glyph>root@pam<Chevron /></Button>
      </AppHeader>
      <Workspace>
        <ResourceTree />
        <Main>
          <TitleBar>
            <Title>Contenedor 115 (zfs-prueba) en el nodo pve2</Title>
            <Tags>Ninguna etiqueta<Pencil /></Tags>
            <Spacer />
            <Button $tone="disabled" $icon disabled><Glyph><fa.FaPlay size={12} /></Glyph>Iniciar</Button>
            <Button $icon><Glyph><fa.FaPowerOff size={13} /></Glyph>Apagar<Split><Chevron /></Split></Button>
            <Button $icon><Glyph><fa.FaRegPaperPlane size={13} /></Glyph>Migrar</Button>
            <Button $icon><Glyph><Terminal /></Glyph>Consola<Split><Chevron /></Split></Button>
            <Button>Más<Chevron /></Button>
            <Button $tone="light" $icon><Glyph><fa.FaQuestionCircle size={12} /></Glyph>Ayuda</Button>
          </TitleBar>
          <Body>
            <Menu>
              {menu.map(([label, icon]) => (
                <MenuItem key={label} href="#" $active={label === "Replicación"}>
                  <Glyph>{icon}</Glyph>
                  <MenuLabel>{label}</MenuLabel>
                  {label === "Cortafuego" && <svg width="6" height="12" viewBox="0 0 6 12"><path d="M0 1l6 5-6 5z" fill="#ddd" /></svg>}
                </MenuItem>
              ))}
            </Menu>
            <Replication />
          </Body>
        </Main>
      </Workspace>
      <Splitter>
        <Grip aria-label="Contraer"><svg width="8" height="4"><path d="M0 0h8L4 4z" fill="currentColor" /></svg></Grip>
      </Splitter>
      <TaskLog />
    </Screen>
  );
}
